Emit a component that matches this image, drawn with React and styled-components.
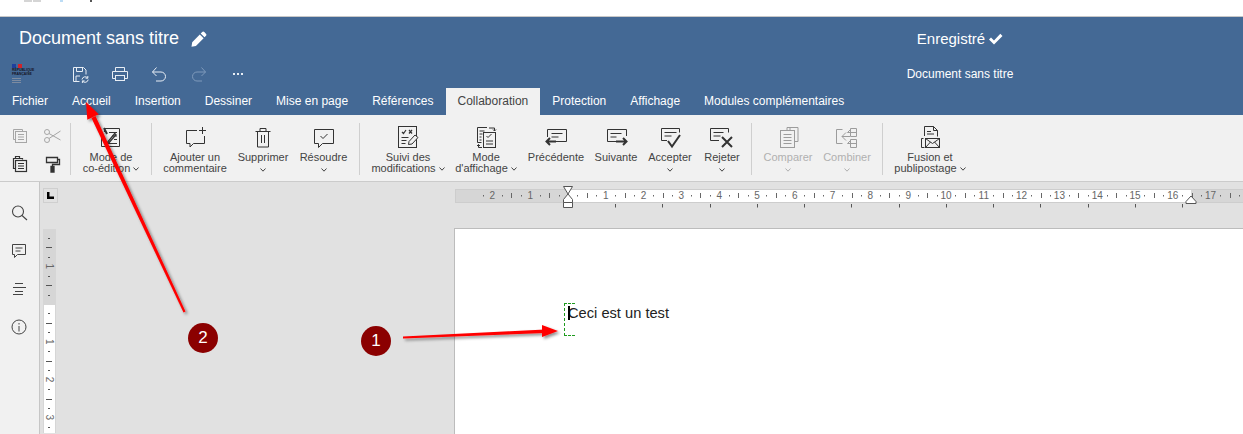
import styled, { createGlobalStyle } from 'styled-components'

const GlobalStyle = createGlobalStyle`
  html, body {
    margin: 0;
    padding: 0;
    background: #fff;
    font-family: 'Liberation Sans', Arial, sans-serif;
  }
`

const Page = styled.div`
  position: relative;
  width: 1243px;
  height: 434px;
  overflow: hidden;
  display: flex;
  flex-direction: column;
`

const BrowserStrip = styled.div`
  height: 16px;
  flex: none;
  background: #fff;
  border-bottom: 1px solid #c8c8c8;
  display: flex;
  align-items: flex-start;
  padding-left: 24px;
`

const StripMark = styled.span`
  width: ${(p) => p.$w}px;
  height: 2px;
  margin-right: ${(p) => p.$gap}px;
  background: ${(p) => p.$color};
`

const Header = styled.header`
  background: #446995;
  color: #fff;
  flex: none;
`

const TitleRow = styled.div`
  height: 43px;
  display: flex;
  align-items: center;
  padding-left: 19px;
`

const DocTitle = styled.div`
  font-size: 18px;
  margin-right: 12px;
`

const Saved = styled.div`
  margin-left: auto;
  width: 566px;
  display: flex;
  justify-content: center;
  align-items: center;
  gap: 3px;
  font-size: 15px;
`

const QuickRow = styled.div`
  height: 28px;
  display: flex;
  align-items: center;
  padding-left: 12px;
`

const Logo = styled.div`
  width: 24px;
  height: 20px;
  margin-right: 24.25px;
  color: #14141f;
  font-size: 3.4px;
  font-weight: 700;
  line-height: 3.6px;
  white-space: nowrap;
`

const Flag = styled.div`
  display: flex;
  gap: 2px;
  margin-bottom: 1px;
`

const FlagPart = styled.span`
  width: 4px;
  height: 4px;
  background: ${(p) => p.$color};
`

const LogoFine = styled.div`
  margin-top: 2px;
  width: 9px;
  height: 5px;
  background: repeating-linear-gradient(#7d8ba0 0 1px, transparent 1px 2px);
`

const QuickButton = styled.div`
  width: 39.5px;
  display: flex;
  justify-content: center;
  color: ${(p) => (p.$dim ? '#7f9abb' : '#e8eef5')};
`

const SubTitle = styled.div`
  margin-left: auto;
  width: 566px;
  text-align: center;
  font-size: 12px;
`

const Tabs = styled.nav`
  height: 27px;
  display: flex;
`

const Tab = styled.div`
  padding: 0 12px;
  line-height: 27px;
  font-size: 12px;
  background: ${(p) => (p.$active ? '#f1f1f1' : 'transparent')};
  color: ${(p) => (p.$active ? '#444' : '#fff')};
`

const Toolbar = styled.div`
  height: 67px;
  flex: none;
  box-sizing: border-box;
  background: #f1f1f1;
  border-bottom: 1px solid #cbcbcb;
  display: flex;
  align-items: flex-start;
  color: #444;
`

const Separator = styled.div`
  width: 1px;
  height: 52px;
  margin-top: 8px;
  margin-left: ${(p) => p.$before || 0}px;
  background: #cfcfcf;
  flex: none;
`

const SmallGroup = styled.div`
  width: 70px;
  box-sizing: border-box;
  padding: 11px 0 0 8px;
  display: grid;
  grid-template-columns: 24px 24px;
  grid-auto-rows: 28px;
  column-gap: 8px;
  justify-items: center;
`

const SmallButton = styled.div`
  color: ${(p) => (p.$off ? '#a6a6a6' : '#333')};
`

const Tool = styled.div`
  width: ${(p) => p.$w}px;
  flex: none;
  display: flex;
  flex-direction: column;
  align-items: center;
  padding-top: 10px;
  color: ${(p) => (p.$off ? '#b0b0b0' : '#444')};
`

const ToolIcon = styled.div`
  height: 24px;
  margin-bottom: 3px;
  color: ${(p) => (p.$off ? '#9c9c9c' : '#333')};
`

const ToolLabel = styled.div`
  font-size: 11px;
  line-height: 11px;
  text-align: center;
  white-space: nowrap;
`

const Chevron = styled.svg`
  width: 6px;
  height: 4px;
  fill: none;
  stroke: currentColor;
  margin-left: ${(p) => (p.$below ? 0 : 3)}px;
  margin-top: ${(p) => (p.$below ? 5 : 0)}px;
  vertical-align: 1px;
  display: ${(p) => (p.$below ? 'block' : 'inline-block')};
`

const Workspace = styled.div`
  flex: 1;
  min-height: 0;
  display: flex;
`

const Sidebar = styled.aside`
  width: 40px;
  flex: none;
  box-sizing: border-box;
  background: #f1f1f1;
  border-right: 1px solid #c6c6c6;
  padding-top: 22px;
  display: flex;
  flex-direction: column;
  align-items: center;
  padding-right: 1px;
`

const SideButton = styled.div`
  height: 38px;
  color: #444;
`

const Canvas = styled.main`
  flex: 1;
  min-width: 0;
  background: #e1e1e1;
  display: grid;
  grid-template-columns: 414px 1fr;
  grid-template-rows: 46px 1fr;
`

const Corner = styled.div`
  width: 13px;
  height: 13px;
  margin: 6px 0 0 3px;
  border: 1px solid #cfcfcf;
  display: flex;
  align-items: center;
  justify-content: center;
`

const HRuler = styled.div`
  height: 46px;
  margin-left: 1px;
  overflow: hidden;
`

const VRulerCell = styled.div`
  padding: 1px 0 0 3px;
`

const Sheet = styled.div`
  background: #fff;
  border-top: 1px solid #bcbcbc;
  border-left: 1px solid #bcbcbc;
  padding: 75px 0 0 113px;
  font-size: 14.67px;
  color: #222;
`

const Paragraph = styled.div`
  position: relative;
  line-height: 18px;
`

const Caret = styled.span`
  position: absolute;
  left: 0;
  top: 2px;
  width: 2px;
  height: 14px;
  background: #000;
`

const ParagraphMark = styled.span`
  position: absolute;
  left: -4px;
  top: -1px;
  width: 10px;
  height: 31px;
  border: 1px dashed #1e9a1e;
  border-right: 0;
`

const Overlay = styled.svg`
  position: absolute;
  left: 0;
  top: 0;
  width: 1243px;
  height: 434px;
  pointer-events: none;
`

const Badge = styled.div`
  position: absolute;
  left: ${(p) => p.$x - 15}px;
  top: ${(p) => p.$y - 15}px;
  width: 30px;
  height: 30px;
  border-radius: 50%;
  background: #8b0000;
  color: #fff;
  font-size: 17px;
  line-height: 30px;
  text-align: center;
`

const Glyph = styled.svg`
  display: block;
  fill: none;
  stroke: currentColor;
  stroke-width: ${(p) => p.$sw || 1};
`

const Icon = ({ size = 24, sw, children }) => (
  <Glyph width={size} height={size} viewBox={`0 0 ${size} ${size}`} $sw={sw}>
    {children}
  </Glyph>
)

const Down = ({ below }) => (
  <Chevron viewBox="0 0 6 4" $below={below}>
    <path d="M.5.5 3 3.200 5.500.5" />
  </Chevron>
)

const CM = 37.8

const Pencil = () => (
  <svg width="16" height="16" viewBox="0 0 16 16" fill="#fff">
    <path d="M11 1.2c.8-.8 1.6-.8 2.3-.1l1.6 1.6c.7.7.7 1.5-.1 2.3l-1.3 1.3-3.8-3.8zM8.8 3.4l3.8 3.8-7.7 7.7-4.4.9.7-4.6z" />
  </svg>
)

const Check = () => (
  <svg width="15" height="12" viewBox="0 0 15 12" fill="#fff">
    <path d="M1 6.500 3 4.400l3 3L12.300.8 14.500 3 6 11.600z" />
  </svg>
)

const SaveIcon = () => (
  <Icon size={20}>
    <path d="M3.500 17.500v-14h10l2.500 2.500v4.500M3.500 17.500h6" />
    <path d="M6.500 3.500v4h6v-4M6 17v-5h4" />
    <path d="M12 15.500a3.200 3.200 0 0 1 5.600-1.600M18.200 15.600a3.200 3.200 0 0 1-5.600 1.600M17.800 12v2.200h-2.200M12.400 19v-2.100h2.200" />
  </Icon>
)

const PrintIcon = () => (
  <Icon size={20}>
    <path d="M5.500 7.500v-4h9v4M5.500 14.500h-3v-7h15v7h-3" />
    <rect x="5.500" y="11.500" width="9" height="5" />
  </Icon>
)

const UndoIcon = () => (
  <Icon size={20}>
    <path d="M7.500 3.500 3.500 8l4 4M3.500 8h8.500a4.500 4.500 0 0 1 0 9H7" />
  </Icon>
)

const RedoIcon = () => (
  <Icon size={20}>
    <path d="M12.500 3.500 16.500 8l-4 4M16.500 8H8a4.500 4.500 0 0 0 0 9h5" />
  </Icon>
)

const MoreIcon = () => (
  <svg width="20" height="20" viewBox="0 0 20 20" fill="currentColor">
    <rect x="5" y="9" width="2" height="2" />
    <rect x="9" y="9" width="2" height="2" />
    <rect x="13" y="9" width="2" height="2" />
  </svg>
)

const CopyIcon = () => (
  <Icon size={20}>
    <path d="M5.500 13.500h-2v-10h9v2" />
    <rect x="5.500" y="5.500" width="11" height="11" />
    <path d="M8 8.500h6M8 11h6M8 13.500h6" />
  </Icon>
)

const ScissorsIcon = () => (
  <Icon size={20}>
    <circle cx="5" cy="6" r="2.500" />
    <circle cx="5" cy="14" r="2.500" />
    <path d="M7 7.500 18.500 14M7 12.500 18.500 5" />
  </Icon>
)

const PasteIcon = () => (
  <Icon size={20} sw={1.2}>
    <path d="M5.500 14.500h-2v-10h9v1" />
    <path d="M5.500 4.500v-2h4v2" />
    <rect x="5.500" y="6.500" width="11" height="11" />
    <path d="M8 9.500h6M8 12h6M8 14.500h6" />
  </Icon>
)

const PainterIcon = () => (
  <Icon size={20} sw={1.3}>
    <path d="M4.500 3.500h11v5h-11zM15.500 5.500h2v5h-7v2" />
    <path d="M9 12.500h3v5.500H9z" fill="currentColor" />
  </Icon>
)

const CoEditIcon = () => (
  <Icon>
    <path d="M5.500 7V3.500h15v18h-18V13" />
    <path d="M10 7.500h8M13 11h5M15 14.500h3M8 18.500h10" />
    <path d="M5 3 8 9" strokeWidth="2" />
    <path d="M9 16.500l-1 2 2-.7 7-8-1.300-1.300z" strokeWidth="1.300" />
  </Icon>
)

const CommentAddIcon = () => (
  <Icon>
    <path d="M14 5.500H3.500v13h3.500v3.500l3.500-3.500h11V11" />
    <path d="M19.500 2v7M16 5.500h7" />
  </Icon>
)

const TrashIcon = () => (
  <Icon>
    <path d="M4.500 6.500h15M9 6V3.500h6V6M6.500 6.500v15.500h11V6.500M10.500 10v8M13.500 10v8" />
  </Icon>
)

const ResolveIcon = () => (
  <Icon>
    <path d="M2.500 4.500h19v14h-11l-4 4v-4h-4z" />
    <path d="M8.500 11l2.500 2.500 4.500-4.500" />
  </Icon>
)

const TrackIcon = () => (
  <Icon>
    <rect x="2.500" y="1.500" width="18" height="21" />
    <path d="M6 7l1.500 1.500L10 5M13 5l3 3.500M16 5l-3 3.500" strokeWidth="1.200" />
    <path d="M5.500 12.500h7M5.500 15.500h5M5.500 18.500h4" />
    <path d="M12.500 19.500l.5-3 6-6.500 3 2.500-6 6.500z" fill="#f1f1f1" />
  </Icon>
)

const ViewIcon = () => (
  <Icon>
    <path d="M13 2.500H3.500v15h4" />
    <path d="M5.500 6h5M5.500 9h3M5.500 12h2M5.500 15h2" />
    <rect x="9.500" y="7.500" width="12" height="15" />
    <path d="M12.500 11l1.500 1.500 3.500-3.500M12 16h7M12 19h7" />
    <path d="M15 3h5.500v3M19 4.500 20.500 6 22 4.500M4.500 19.500v3H8M3 21l1.500-1.500L6 21" />
  </Icon>
)

const PrevIcon = () => (
  <Icon>
    <path d="M3.500 12V4.500h19v12H12" />
    <path d="M7.500 8.500h11M7.500 12h7" />
    <path d="M12 16.500H2.500M6 13l-3.500 3.500L6 20" strokeWidth="2" />
  </Icon>
)

const NextIcon = () => (
  <Icon>
    <path d="M12 16.500H3.500v-12h19V11" />
    <path d="M6.500 8.500h11M6.500 12h6" />
    <path d="M12 16.500h10.500M19 13l3.500 3.500L19 20" strokeWidth="2" />
  </Icon>
)

const AcceptIcon = () => (
  <Icon>
    <path d="M9 15.500H3.500v-12h18v4" />
    <path d="M6.500 7.500h12M6.500 11h7" />
    <path d="M10 16l4 5.500 8-11.500" strokeWidth="2" />
  </Icon>
)

const RejectIcon = () => (
  <Icon>
    <path d="M9 15.500H.5v-12h18v4" />
    <path d="M3.500 7.500h10M3.500 11h7" />
    <path d="M12 12l10 10M22 12 12 22" strokeWidth="2" />
  </Icon>
)

const CompareIcon = () => (
  <Icon>
    <path d="M11 5.500V2.500h11v14h-3" />
    <rect x="4.500" y="5.500" width="14" height="17" />
    <path d="M7.500 9.500h8M7.500 12.500h8M7.500 15.500h8M7.500 18.500h8M14 2.500v3" />
  </Icon>
)

const CombineIcon = () => (
  <Icon>
    <path d="M7.500 4.500h-6v14h6" />
    <path d="M15.500 3.500h6v8h-6zM15.500 14.500h6v8h-6z" />
    <path d="M7 11.500h8M11 7.500l-4 4 4 4M21.500 7.500h-9l3-3M21.500 18.500h-9l3-3" />
  </Icon>
)

const MergeIcon = () => (
  <Icon>
    <path d="M6.500 11V1.500h9l4 4v6M15.500 1.500v4h4" />
    <path d="M9 6.500h4M9 9h7" />
    <rect x="7.500" y="13.500" width="14" height="9" />
    <path d="M7.500 13.500l7 5 7-5M7.500 22.500l5-5.500M21.500 22.500l-5-5.500M5.500 13.500h-2v9h3" />
  </Icon>
)

const SearchIcon = () => (
  <Icon size={18} sw={1.1}>
    <circle cx="8" cy="7.500" r="5.500" />
    <path d="M12 11.500 17 16" />
  </Icon>
)

const ChatIcon = () => (
  <Icon size={18}>
    <path d="M2.500 2.500h13v10h-8l-3 3v-3h-2z" />
    <path d="M5.500 6h7M5.500 9h5" />
  </Icon>
)

const OutlineIcon = () => (
  <Icon size={18}>
    <path d="M5 3.500h8M3 7.500h13M5 11.500h8M3 14.500h10" />
  </Icon>
)

const InfoIcon = () => (
  <Icon size={18}>
    <circle cx="9" cy="9" r="7" />
    <path d="M9 8v5.500M9 5v1.500" />
  </Icon>
)

// ruler numbers run from the zero of the page margin, one graduation per cm
const HorizontalRuler = () => {
  const zero = 113
  const marks = []
  for (let q = -9; q <= 72; q++) {
    const x = Math.round(zero + (q * CM) / 4) + 0.5
    if (q % 4 === 0) continue
    marks.push(<path key={q} d={q % 2 === 0 ? `M${x} 11v5` : `M${x} 13v1.500`} stroke="#666" />)
  }
  const numbers = []
  for (let n = -2; n <= 17; n++) {
    if (n === 0) continue
    numbers.push(
      <text key={n} x={zero + n * CM} y="17" textAnchor="middle" fontSize="10" fill="#666" fontFamily="Liberation Sans">
        {Math.abs(n)}
      </text>,
    )
  }
  const stops = [160, 207, 255, 302, 349, 396, 444, 491, 538, 585, 633, 680, 727]
  return (
    <svg width="788" height="46" viewBox="0 0 788 46" display="block">
      <rect x=".5" y="7.500" width="788" height="13" fill="#d6d6d6" stroke="#cdcdcd" />
      <rect x="113" y="8" width="623" height="12" fill="#fff" />
      {marks}
      {numbers}
      {stops.map((x) => (
        <path key={x} d={`M${x + 0.5} 22v3.500`} stroke="#555" />
      ))}
      <path d="M108.500 4.500h9L113 12zM113 12l4.500 5.500v3h-9v-3z" fill="#fff" stroke="#555" />
      <path d="M108.500 20.500h9v5h-9z" fill="#fff" stroke="#555" />
      <path d="M736 14l5 5.500v2h-10v-2z" fill="#fff" stroke="#555" />
    </svg>
  )
}

const VerticalRuler = () => {
  const zero = 75
  const marks = []
  for (let q = -7; q <= 15; q++) {
    if (q % 4 === 0) continue
    const y = Math.round(zero + (q * CM) / 4) + 0.5
    marks.push(<path key={q} d={q % 2 === 0 ? `M3 ${y}h6` : `M5 ${y}h2`} stroke="#555" />)
  }
  const numbers = [-1, 1, 2, 3].map((n) => (
    <text
      key={n}
      x="6"
      y={zero + n * CM}
      textAnchor="middle"
      dominantBaseline="central"
      fontSize="10"
      fill="#666"
      fontFamily="Liberation Sans"
      transform={`rotate(90 6 ${zero + n * CM})`}
    >
      {Math.abs(n)}
    </text>
  ))
  return (
    <svg width="13" height="204" viewBox="0 0 13 204" display="block">
      <rect width="13" height="204" fill="#d6d6d6" />
      <rect x="1" y="76" width="11" height="128" fill="#fff" />
      {marks}
      {numbers}
    </svg>
  )
}

const tabs = [
  'Fichier',
  'Accueil',
  'Insertion',
  'Dessiner',
  'Mise en page',
  'Références',
  'Collaboration',
  'Protection',
  'Affichage',
  'Modules complémentaires',
]

export default function App() {
  return (
    <Page>
      <GlobalStyle />
      <BrowserStrip>
        <StripMark $w={8} $gap={1} $color="#d5d5d5" />
        <StripMark $w={8} $gap={19} $color="#d5d5d5" />
        <StripMark $w={3} $gap={27} $color="#bcdcf5" />
        <StripMark $w={2} $gap={0} $color="#555" />
      </BrowserStrip>

      <Header>
        <TitleRow>
          <DocTitle>Document sans titre</DocTitle>
          <Pencil />
          <Saved>
            Enregistré <Check />
          </Saved>
        </TitleRow>
        <QuickRow>
          <Logo>
            <Flag>
              <FlagPart $color="#1f3f9e" />
              <FlagPart $color="#d2232a" />
            </Flag>
            RÉPUBLIQUE
            <br />
            FRANÇAISE
            <LogoFine />
          </Logo>
          <QuickButton><SaveIcon /></QuickButton>
          <QuickButton><PrintIcon /></QuickButton>
          <QuickButton><UndoIcon /></QuickButton>
          <QuickButton $dim><RedoIcon /></QuickButton>
          <QuickButton><MoreIcon /></QuickButton>
          <SubTitle>Document sans titre</SubTitle>
        </QuickRow>
        <Tabs>
          {tabs.map((t) => (
            <Tab key={t} $active={t === 'Collaboration'}>{t}</Tab>
          ))}
        </Tabs>
      </Header>

      <Toolbar>
        <SmallGroup>
          <SmallButton $off><CopyIcon /></SmallButton>
          <SmallButton $off><ScissorsIcon /></SmallButton>
          <SmallButton><PasteIcon /></SmallButton>
          <SmallButton><PainterIcon /></SmallButton>
        </SmallGroup>
        <Separator />
        <Tool $w={80}>
          <ToolIcon><CoEditIcon /></ToolIcon>
          <ToolLabel>Mode de<br />co-édition<Down /></ToolLabel>
        </Tool>
        <Separator />
        <Tool $w={86}>
          <ToolIcon><CommentAddIcon /></ToolIcon>
          <ToolLabel>Ajouter un<br />commentaire</ToolLabel>
        </Tool>
        <Tool $w={50}>
          <ToolIcon><TrashIcon /></ToolIcon>
          <ToolLabel>Supprimer</ToolLabel>
          <Down below />
        </Tool>
        <Tool $w={71}>
          <ToolIcon><ResolveIcon /></ToolIcon>
          <ToolLabel>Résoudre</ToolLabel>
          <Down below />
        </Tool>
        <Separator />
        <Tool $w={96}>
          <ToolIcon><TrackIcon /></ToolIcon>
          <ToolLabel>Suivi des<br />modifications<Down /></ToolLabel>
        </Tool>
        <Tool $w={60}>
          <ToolIcon><ViewIcon /></ToolIcon>
          <ToolLabel>Mode<br />d'affichage<Down /></ToolLabel>
        </Tool>
        <Tool $w={80}>
          <ToolIcon><PrevIcon /></ToolIcon>
          <ToolLabel>Précédente</ToolLabel>
        </Tool>
        <Tool $w={40}>
          <ToolIcon><NextIcon /></ToolIcon>
          <ToolLabel>Suivante</ToolLabel>
        </Tool>
        <Tool $w={68}>
          <ToolIcon><AcceptIcon /></ToolIcon>
          <ToolLabel>Accepter</ToolLabel>
          <Down below />
        </Tool>
        <Tool $w={36}>
          <ToolIcon><RejectIcon /></ToolIcon>
          <ToolLabel>Rejeter</ToolLabel>
          <Down below />
        </Tool>
        <Separator $before={11} />
        <Tool $w={72} $off>
          <ToolIcon $off><CompareIcon /></ToolIcon>
          <ToolLabel>Comparer</ToolLabel>
          <Down below />
        </Tool>
        <Tool $w={46} $off>
          <ToolIcon $off><CombineIcon /></ToolIcon>
          <ToolLabel>Combiner</ToolLabel>
          <Down below />
        </Tool>
        <Separator $before={12} />
        <Tool $w={94}>
          <ToolIcon><MergeIcon /></ToolIcon>
          <ToolLabel>Fusion et<br />publipostage<Down /></ToolLabel>
        </Tool>
      </Toolbar>

      <Workspace>
        <Sidebar>
          <SideButton><SearchIcon /></SideButton>
          <SideButton><ChatIcon /></SideButton>
          <SideButton><OutlineIcon /></SideButton>
          <SideButton><InfoIcon /></SideButton>
        </Sidebar>
        <Canvas>
          <Corner>
            <svg width="7" height="7" viewBox="0 0 7 7" fill="#000">
              <path d="M0 0h2.500v4.500H7V7H0z" />
            </svg>
          </Corner>
          <HRuler><HorizontalRuler /></HRuler>
          <VRulerCell><VerticalRuler /></VRulerCell>
          <Sheet>
            <Paragraph>
              <ParagraphMark />
              <Caret />
              Ceci est un test
            </Paragraph>
          </Sheet>
        </Canvas>
      </Workspace>

      <Overlay viewBox="0 0 1243 434">
        <defs>
          <filter id="arrow-shadow" x="-20%" y="-20%" width="140%" height="140%">
            <feDropShadow dx="2" dy="2" stdDeviation="1.5" floodColor="#000" floodOpacity="0.45" />
          </filter>
        </defs>
        <g filter="url(#arrow-shadow)" fill="#ff0000">
          <path d="M403 336.500 545 329.500V333L403 338.500z" />
          <path d="M558 331 542 325 542 337z" />
          <path d="M183.500 312.500 91.500 118 95.500 116 185.500 311.500z" />
          <path d="M86 102 98.700 114.300 87.300 119.700z" />
        </g>
      </Overlay>
      <Badge $x={376} $y={341}>1</Badge>
      <Badge $x={203} $y={338}>2</Badge>
    </Page>
  )
}
